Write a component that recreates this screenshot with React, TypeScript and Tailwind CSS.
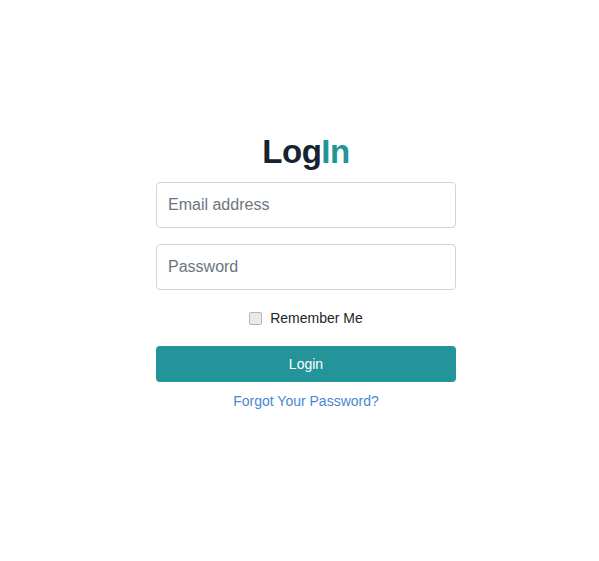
export default function App() {
  return (
    <div className="min-h-[561px] w-full bg-white flex flex-col items-center pt-[132px] pl-[13px]" style={{ fontFamily: '"Liberation Sans", Arial, sans-serif' }}>
      <h1 className="text-[33px] leading-[40px] font-bold tracking-[-0.5px] mb-[10px]">
        <span className="text-[#17232e]">Log</span>
        <span className="text-[#22949a]">In</span>
      </h1>
      <div className="w-[300px] flex flex-col">
        <input
          type="email"
          placeholder="Email address"
          className="h-[46px] w-full border border-[#ced4da] rounded-[4px] px-[11px] text-[16px] text-[#495057] placeholder:text-[#6c757d] outline-none"
        />
        <input
          type="password"
          placeholder="Password"
          className="mt-[16px] h-[46px] w-full border border-[#ced4da] rounded-[4px] px-[11px] text-[16px] text-[#495057] placeholder:text-[#6c757d] outline-none"
        />
        <label className="mt-[18px] flex items-center justify-center gap-[8px] text-[14px] leading-[20px] text-[#212529]">
          <input type="checkbox" className="appearance-none w-[13px] h-[13px] m-0 border border-[#b5b5b5] bg-[#e9e9e9] rounded-[2px]" />
          <span>Remember Me</span>
        </label>
        <button className="mt-[18px] h-[36px] w-full rounded-[4px] bg-[#22949a] text-white text-[14px]">
          Login
        </button>
        <a href="#" className="mt-[9px] text-center text-[14px] leading-[20px] text-[#4a86cf]">
          Forgot Your Password?
        </a>
      </div>
    </div>
  );
}
